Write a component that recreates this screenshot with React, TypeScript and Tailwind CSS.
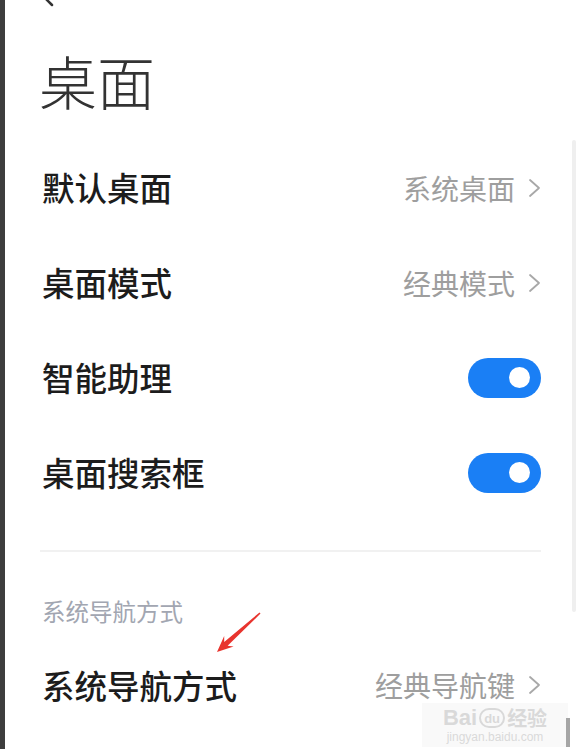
import React from "react"

const cjk = { fontFamily: '"Noto Sans CJK SC", "Noto Sans", sans-serif' }

function Chevron() {
  return (
    <svg width="13" height="20" viewBox="0 0 13 20" className="ml-[13px] shrink-0">
      <path d="M2 2 L11 10 L2 18" fill="none" stroke="#a8a8a8" strokeWidth="1.8" strokeLinecap="round" strokeLinejoin="round" />
    </svg>
  )
}

function Toggle() {
  return (
    <div className="w-[73px] h-[40px] rounded-full bg-[#1a7ff5] flex items-center justify-end pr-[11px]">
      <div className="w-[21px] h-[21px] rounded-full bg-white" />
    </div>
  )
}

function Row({ label, value, toggle }: { label: string; value?: string; toggle?: boolean }) {
  return (
    <div className="h-[95px] flex items-center justify-between">
      <span className="text-[32.5px] leading-none font-medium text-[#1c1c1c]">{label}</span>
      {toggle ? (
        <Toggle />
      ) : (
        <span className="flex items-center text-[28px] leading-none text-[#9e9e9e]">
          {value}
          <Chevron />
        </span>
      )}
    </div>
  )
}

export default function App() {
  return (
    <div className="relative w-[578px] h-[749px] bg-white flex overflow-hidden" style={cjk}>
      {/* left edge of the video frame */}
      <div className="w-[5px] h-full bg-[#3d3d3d]" />

      <div className="flex-1 flex flex-col pl-[37px] pr-[37px]">
        {/* header */}
        <div className="h-[140px] pt-[40px]">
          <div className="h-[80px] flex items-center -ml-[3px]">
            <span className="text-[58px] leading-none font-light text-[#333]">桌面</span>
          </div>
        </div>

        <Row label="默认桌面" value="系统桌面" />
        <Row label="桌面模式" value="经典模式" />
        <Row label="智能助理" toggle />
        <Row label="桌面搜索框" toggle />

        <div className="mt-[30px] h-[2px] bg-[#f1f1f1] -ml-[2px]" />

        <div className="mt-[40px] h-[40px] flex items-center">
          <span className="text-[23.5px] leading-none text-[#a2a6b1]">系统导航方式</span>
        </div>

        <div className="h-[106px] flex items-center justify-between">
          <span className="text-[32.5px] leading-none font-medium text-[#1c1c1c]">系统导航方式</span>
          <span className="flex items-center text-[28px] leading-none text-[#9e9e9e]">
            经典导航键
            <Chevron />
          </span>
        </div>
      </div>

      {/* back arrow, cut off at the top */}
      <svg className="absolute left-[40px] top-0" width="20" height="10" viewBox="0 0 20 10">
        <path d="M3 -4 L12 5" stroke="#333" strokeWidth="2.5" strokeLinecap="round" />
      </svg>

      {/* scrollbar */}
      <div className="absolute right-[2px] top-[140px] w-[4px] h-[472px] rounded-full bg-[#efefef]" />

      {/* red annotation arrow */}
      <svg className="absolute inset-0 pointer-events-none" width="578" height="749" viewBox="0 0 578 749">
        <polygon
          points="217,652 233.6,646.4 227.6,645.8 260.5,613.5 259.5,612.5 224.2,642 224.2,636"
          fill="#e8342e"
        />
      </svg>

      {/* watermark */}
      <div className="absolute left-[422px] top-[703px] w-[146px] h-[44px] bg-[#f6f6f6]/70 flex flex-col items-center justify-center" style={{ fontFamily: '"Liberation Sans", "Noto Sans CJK SC", sans-serif' }}>
        <div className="flex items-center text-[22px] leading-none text-[#d9d9d9] font-bold">
          <span>Bai</span>
          <span className="mx-[2px] w-[26px] h-[20px] rounded-full border-2 border-[#d9d9d9] text-[13px] flex items-center justify-center">du</span>
          <span style={cjk} className="text-[20px]">经验</span>
        </div>
        <div className="mt-[2px] text-[12px] leading-none text-[#d9d9d9]">jingyan.baidu.com</div>
      </div>
      <div className="absolute left-[566px] top-[718px] w-[4px] h-[29px] bg-[#a6a6a6]" />
    </div>
  )
}
